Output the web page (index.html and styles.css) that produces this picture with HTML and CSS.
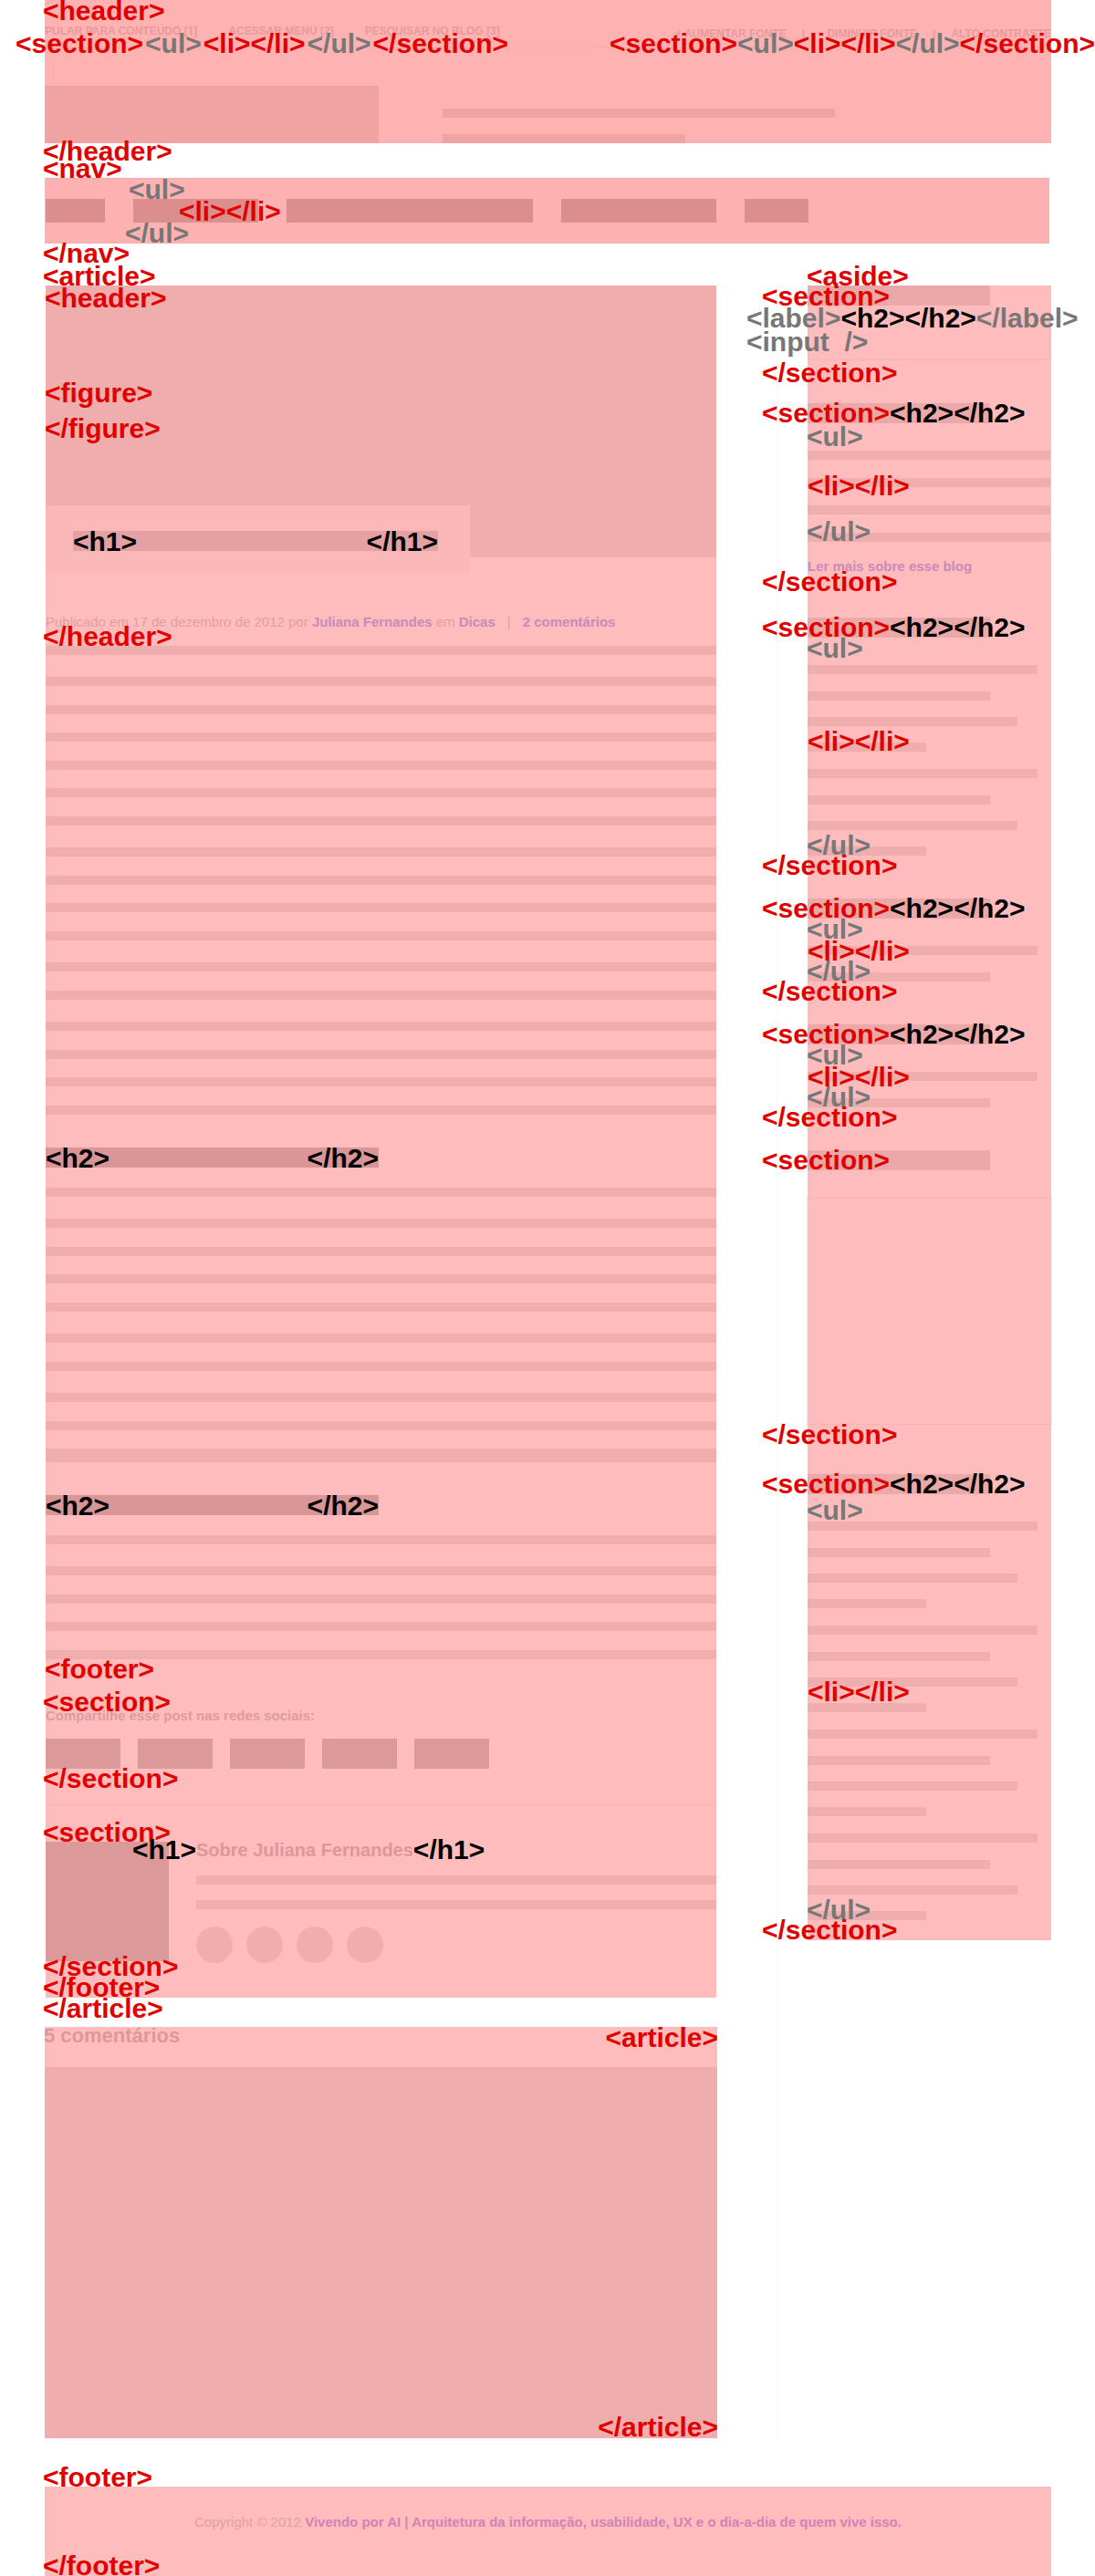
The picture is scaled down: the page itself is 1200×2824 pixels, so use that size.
FILE: index.html
```html
<!DOCTYPE html>
<html lang="pt-BR">
<head>
<meta charset="utf-8">
<title>Vivendo por AI</title>
<link rel="stylesheet" href="styles.css">
</head>
<body>
<div class="page">

  <header class="site-header">
    <span class="tag header-open">&lt;header&gt;</span>
    <div class="topbar">
      <ul class="skip-links">
        <li><a href="#conteudo">PULAR PARA CONTEÚDO [1]</a></li>
        <li><a href="#menu">ACESSAR MENU [2]</a></li>
        <li><a href="#busca">PESQUISAR NO BLOG [3]</a></li>
      </ul>
      <ul class="access-links">
        <li><a href="#mais">+ AUMENTAR FONTE</a></li>
        <li>|</li>
        <li><a href="#menos">- DIMINUIR FONTE</a></li>
        <li>|</li>
        <li><a href="#contraste">ALTO CONTRASTE</a></li>
      </ul>
      <div class="tag tag-row skip-tags"><span>&lt;section&gt;</span><span class="muted">&lt;ul&gt;</span><span>&lt;li&gt;&lt;/li&gt;</span><span class="muted">&lt;/ul&gt;</span><span>&lt;/section&gt;</span></div>
      <div class="tag tag-row access-tags"><span>&lt;section&gt;</span><span class="muted">&lt;ul&gt;</span><span>&lt;li&gt;&lt;/li&gt;</span><span class="muted">&lt;/ul&gt;</span><span>&lt;/section&gt;</span></div>
    </div>
    <div class="brand">
      <div class="logo"></div>
      <div class="tagline"><span class="tagline-long"></span><span class="tagline-short"></span></div>
    </div>
    <span class="tag header-close">&lt;/header&gt;</span>
  </header>

  <nav class="site-nav" id="menu">
    <span class="tag nav-open">&lt;nav&gt;</span>
    <ul class="menu">
      <li class="item-xs"></li>
      <li class="item-md"></li>
      <li class="item-xl"></li>
      <li class="item-lg"></li>
      <li class="item-sm"></li>
    </ul>
    <span class="tag muted nav-ul-open">&lt;ul&gt;</span>
    <span class="tag nav-li">&lt;li&gt;&lt;/li&gt;</span>
    <span class="tag muted nav-ul-close">&lt;/ul&gt;</span>
    <span class="tag nav-close">&lt;/nav&gt;</span>
  </nav>

  <div class="columns">
    <main class="content" id="conteudo">
      <article class="post">
        <span class="tag post-open">&lt;article&gt;</span>
        <header class="post-header">
          <span class="tag post-header-open">&lt;header&gt;</span>
          <figure class="post-figure">
            <span class="tag figure-open">&lt;figure&gt;</span>
            <span class="tag figure-close">&lt;/figure&gt;</span>
          </figure>
          <div class="title-box">
            <h1 class="title-bar"><span class="tag-text">&lt;h1&gt;</span><span class="tag-text">&lt;/h1&gt;</span></h1>
          </div>
          <p class="meta">Publicado em 17 de dezembro de 2012 por <a href="#autor">Juliana Fernandes</a> em <a href="#dicas">Dicas</a><span class="divider">|</span><a href="#comentarios">2 comentários</a></p>
          <span class="tag post-header-close">&lt;/header&gt;</span>
        </header>

        <div class="text">
          <div class="para"><span></span></div>
          <div class="para"><span></span><span></span><span></span><span></span><span></span><span></span></div>
          <div class="para"><span></span><span></span><span></span><span></span></div>
          <div class="para"><span></span><span></span></div>
          <div class="para"><span></span><span></span><span></span><span></span></div>
        </div>

        <h2 class="subtitle-bar"><span class="tag-text">&lt;h2&gt;</span><span class="tag-text">&lt;/h2&gt;</span></h2>
        <div class="text">
          <div class="para"><span></span></div>
          <div class="para"><span></span><span></span><span></span><span></span></div>
          <div class="para"><span></span><span></span></div>
          <div class="para"><span></span><span></span><span class="thick"></span></div>
        </div>

        <h2 class="subtitle-bar"><span class="tag-text">&lt;h2&gt;</span><span class="tag-text">&lt;/h2&gt;</span></h2>
        <div class="text">
          <div class="para"><span></span></div>
          <div class="para"><span></span><span></span><span></span><span></span></div>
        </div>

        <footer class="post-footer">
          <span class="tag post-footer-open">&lt;footer&gt;</span>
          <section class="share">
            <span class="tag share-open">&lt;section&gt;</span>
            <p class="share-label">Compartilhe esse post nas redes sociais:</p>
            <ul class="share-list"><li></li><li></li><li></li><li></li><li></li></ul>
            <span class="tag share-close">&lt;/section&gt;</span>
          </section>
          <section class="author" id="autor">
            <span class="tag author-open">&lt;section&gt;</span>
            <div class="photo"></div>
            <div class="bio">
              <h1 class="author-name">Sobre Juliana Fernandes<span class="tag dark name-open">&lt;h1&gt;</span><span class="tag dark name-close">&lt;/h1&gt;</span></h1>
              <div class="bio-lines"><span></span><span></span></div>
              <ul class="profiles"><li></li><li></li><li></li><li></li></ul>
            </div>
            <span class="tag author-close">&lt;/section&gt;</span>
          </section>
          <span class="tag post-footer-close">&lt;/footer&gt;</span>
        </footer>
        <span class="tag post-close">&lt;/article&gt;</span>
      </article>

      <article class="comments" id="comentarios">
        <span class="tag comments-open">&lt;article&gt;</span>
        <h2 class="comments-title">5 comentários</h2>
        <div class="comments-body"></div>
        <span class="tag comments-close">&lt;/article&gt;</span>
      </article>
    </main>

    <div class="side">
      <aside class="sidebar">
        <span class="tag aside-open">&lt;aside&gt;</span>

        <section class="widget search">
          <label class="widget-bar" for="busca"><span class="tag tag-row label-tags"><span class="muted">&lt;label&gt;</span><span class="dark">&lt;h2&gt;&lt;/h2&gt;</span><span class="muted">&lt;/label&gt;</span></span></label>
          <input class="search-box" id="busca" type="text">
          <span class="tag widget-open">&lt;section&gt;</span>
          <span class="tag muted input-tag">&lt;input  /&gt;</span>
          <span class="tag widget-close">&lt;/section&gt;</span>
        </section>

        <section class="widget about">
          <h2 class="widget-bar"></h2>
          <span class="tag widget-open">&lt;section&gt;<span class="dark">&lt;h2&gt;&lt;/h2&gt;</span></span>
          <div class="list">
            <ul class="bars bars-full"><li></li><li></li><li></li><li></li></ul>
            <span class="tag muted ul-open">&lt;ul&gt;</span>
            <span class="tag li-pair">&lt;li&gt;&lt;/li&gt;</span>
            <span class="tag muted ul-close">&lt;/ul&gt;</span>
          </div>
          <a class="more" href="#sobre">Ler mais sobre esse blog</a>
          <span class="tag widget-close">&lt;/section&gt;</span>
        </section>

        <section class="widget topics">
          <h2 class="widget-bar"></h2>
          <span class="tag widget-open">&lt;section&gt;<span class="dark">&lt;h2&gt;&lt;/h2&gt;</span></span>
          <div class="list">
            <ul class="bars"><li></li><li></li><li></li><li></li><li></li><li></li><li></li><li></li></ul>
            <span class="tag muted ul-open">&lt;ul&gt;</span>
            <span class="tag li-pair">&lt;li&gt;&lt;/li&gt;</span>
            <span class="tag muted ul-close">&lt;/ul&gt;</span>
          </div>
          <span class="tag widget-close">&lt;/section&gt;</span>
        </section>

        <section class="widget">
          <h2 class="widget-bar"></h2>
          <span class="tag widget-open">&lt;section&gt;<span class="dark">&lt;h2&gt;&lt;/h2&gt;</span></span>
          <div class="list">
            <ul class="bars"><li></li><li></li></ul>
            <span class="tag muted ul-open">&lt;ul&gt;</span>
            <span class="tag li-pair">&lt;li&gt;&lt;/li&gt;</span>
            <span class="tag muted ul-close">&lt;/ul&gt;</span>
          </div>
          <span class="tag widget-close">&lt;/section&gt;</span>
        </section>

        <section class="widget">
          <h2 class="widget-bar"></h2>
          <span class="tag widget-open">&lt;section&gt;<span class="dark">&lt;h2&gt;&lt;/h2&gt;</span></span>
          <div class="list">
            <ul class="bars"><li></li><li></li></ul>
            <span class="tag muted ul-open">&lt;ul&gt;</span>
            <span class="tag li-pair">&lt;li&gt;&lt;/li&gt;</span>
            <span class="tag muted ul-close">&lt;/ul&gt;</span>
          </div>
          <span class="tag widget-close">&lt;/section&gt;</span>
        </section>

        <section class="widget social">
          <h2 class="widget-bar"></h2>
          <span class="tag widget-open">&lt;section&gt;</span>
          <div class="social-box"></div>
          <span class="tag widget-close">&lt;/section&gt;</span>
        </section>

        <section class="widget archive">
          <h2 class="widget-bar"></h2>
          <span class="tag widget-open">&lt;section&gt;<span class="dark">&lt;h2&gt;&lt;/h2&gt;</span></span>
          <div class="list">
            <ul class="bars"><li></li><li></li><li></li><li></li><li></li><li></li><li></li><li></li><li></li><li></li><li></li><li></li><li></li><li></li><li></li><li></li></ul>
            <span class="tag muted ul-open">&lt;ul&gt;</span>
            <span class="tag li-pair">&lt;li&gt;&lt;/li&gt;</span>
            <span class="tag muted ul-close">&lt;/ul&gt;</span>
          </div>
          <span class="tag widget-close">&lt;/section&gt;</span>
        </section>
      </aside>
    </div>
  </div>

  <footer class="site-footer">
    <span class="tag footer-open">&lt;footer&gt;</span>
    <p class="copyright">Copyright © 2012 <a href="#inicio">Vivendo por AI | Arquitetura da informação, usabilidade, UX e o dia-a-dia de quem vive isso.</a></p>
    <span class="tag footer-close">&lt;/footer&gt;</span>
  </footer>
</div>
</body>
</html>
```

FILE: styles.css
```css
* { box-sizing: border-box; margin: 0; padding: 0; }

body {
  background: #fff;
  color: #dfa0a0;
  font: 15px/20px "Liberation Sans", Arial, sans-serif;
}

ul { list-style: none; }
a { color: inherit; text-decoration: none; }

.page { padding: 0 48px 0 49px; overflow: clip; }

/* Element names written over the wireframe */
.tag, .tag-text {
  color: #e10000;
  font-size: 30px;
  font-weight: bold;
  line-height: 30px;
  white-space: pre;
}
.tag { position: absolute; z-index: 2; left: -2px; }
.tag-text { color: #000; }
.tag-row { display: flex; }
.muted { color: #777; }
.dark { color: #000; }

/* Site header */
.site-header { position: relative; background: #feb2b2; }
.header-open { top: -3px; }
.header-close { bottom: -24px; }

.topbar {
  position: relative;
  display: flex;
  justify-content: space-between;
  height: 53px;
  border-bottom: 1px solid #f8abab;
  color: #e79b9b;
  font-size: 12px;
  font-weight: bold;
  line-height: 14px;
}
.skip-links { display: flex; gap: 34px; padding-top: 27px; }
.access-links { display: flex; gap: 17px; padding-top: 30px; }
.skip-tags { top: 33px; left: -32px; gap: 2px; }
.access-tags { top: 33px; left: auto; right: -48px; }

.brand { display: flex; gap: 70px; padding-top: 41px; }
.logo { width: 366px; height: 63px; background: #f1a3a3; }
.tagline { display: flex; flex-direction: column; justify-content: flex-end; gap: 18px; width: 430px; }
.tagline span { height: 10px; background: #f1a3a3; }
.tagline-short { width: 266px; }

/* Navigation */
.site-nav {
  position: relative;
  margin: 38px 2px 0 0;
  padding: 22px 1px 23px;
  border-top: 1px solid #f5aaaa;
  background: #feb1b1;
}
.menu { display: flex; gap: 31px; }
.menu li { height: 26px; background: #dc8e8d; }
.menu .item-xs { width: 65px; }
.menu .item-sm { width: 70px; }
.menu .item-md { width: 137px; }
.menu .item-lg { width: 170px; }
.menu .item-xl { width: 270px; }
.nav-open { top: -26px; }
.nav-close { bottom: -26px; }
.nav-ul-open { top: -3px; left: 92px; }
.nav-li { top: 21px; left: 147px; }
.nav-ul-close { bottom: -4px; left: 88px; }

/* Columns */
.columns { display: flex; gap: 65px; margin-top: 46px; }
.content { flex: 1; min-width: 0; }
.side { width: 301px; padding-left: 33px; border-left: 1px solid #f8f8f8; }

/* Post */
.post { position: relative; margin: 0 1px; padding-bottom: 38px; background: #ffbcbc; }
.post .tag { left: -3px; }
.post-open { top: -25px; }
.post-close { bottom: -27px; }

.post-header { position: relative; margin-bottom: 16px; }
.post-figure { position: relative; height: 298px; background: #f0adad; }
.post .post-header-open { top: -1px; left: -1px; }
.post .figure-open { top: 103px; left: -1px; }
.post .figure-close { top: 142px; left: -1px; }
.post-header-close { bottom: -21px; }
.title-box {
  position: relative;
  width: 465px;
  margin-top: -57px;
  padding: 28px 35px 24px 30px;
  background: #fbb8b8;
}
.title-bar, .subtitle-bar { display: flex; justify-content: space-between; height: 22px; }
.title-bar { background: #e5a1a1; }
.title-bar .tag-text, .subtitle-bar .tag-text { margin-top: -3px; }
.meta { margin-top: 44px; }
.meta a, .more { color: #c78bbb; font-weight: bold; }
.divider { margin: 0 13px; }

.subtitle-bar { width: 365px; margin: 36px 0 22px; background: #da9696; }

.text { display: flex; flex-direction: column; gap: 24px; }
.para span { display: block; height: 10px; margin-top: 21px; background: #f0adad; }
.para span:nth-child(odd) { margin-top: 20px; }
.para span:first-child { margin-top: 0; }
.para .thick { height: 15px; }

/* Post footer */
.post-footer { position: relative; padding-top: 52px; }
.post .post-footer-open { top: -4px; left: -1px; }
.post-footer-close { bottom: -42px; }
.share { position: relative; padding-bottom: 39px; border-bottom: 1px solid #f8b4b4; }
.share-open { top: -20px; }
.share-close { bottom: 13px; }
.share-label { margin-bottom: 15px; color: #dd9b9b; font-weight: bold; }
.share-list { display: flex; gap: 19px; }
.share-list li { width: 82px; height: 33px; background: #db9999; }

.author { position: relative; display: flex; gap: 30px; padding-top: 40px; }
.author-open { top: 15px; }
.author-close { bottom: -19px; }
.photo { width: 135px; height: 131px; background: #db9999; }
.bio { flex: 1; }
.author-name {
  position: relative;
  width: max-content;
  margin-bottom: 19px;
  color: #dd9797;
  font-size: 20px;
  line-height: 18px;
}
.post .name-open { top: -6px; left: auto; right: 100%; }
.post .name-close { top: -6px; left: 100%; }
.bio-lines { display: flex; flex-direction: column; gap: 17px; }
.bio-lines span { height: 10px; background: #f0adad; }
.profiles { display: flex; gap: 15px; margin-top: 19px; }
.profiles li { width: 40px; height: 40px; border-radius: 50%; background: #f0adad; }

/* Comments */
.comments { position: relative; margin-top: 32px; background: #ffbcbc; }
.comments .tag { left: auto; right: -1px; }
.comments-open { top: -3px; }
.comments-close { bottom: -3px; }
.comments-title { margin: 0 0 24px -1px; color: #dd9797; font-size: 22px; line-height: 20px; }
.comments-body { height: 407px; background: #f0adad; }

/* Sidebar */
.sidebar {
  position: relative;
  display: flex;
  flex-direction: column;
  gap: 47px;
  padding-bottom: 22px;
  background: #ffbcbc;
}
.aside-open { top: -25px; left: -1px; }
.widget { position: relative; }
.widget-bar { display: block; width: 200px; height: 22px; margin-bottom: 30px; background: #eaa8a8; }
.widget-open { top: -4px; left: -50px; }
.widget-close { bottom: -26px; left: -50px; }

.search .widget-bar { margin-bottom: 16px; }
.search .widget-open { top: -3px; }
.search .widget-close { bottom: -29px; }
.search-box {
  display: block;
  width: calc(100% - 1px);
  height: 44px;
  padding: 0 10px;
  border: 1px solid #f8b4b4;
  border-radius: 5px;
  outline: none;
  background: transparent;
  color: inherit;
  font: inherit;
}
.label-tags { top: 21px; left: -67px; }
.input-tag { top: 47px; left: -67px; }

.list { position: relative; }
.ul-open { top: -33px; left: -1px; }
.li-pair { top: -9px; left: 0; }
.ul-close { bottom: -4px; left: -1px; }

.bars li { height: 10px; background: #f0adad; }
.bars li + li { margin-top: 18px; }
.bars li:nth-child(4n+1) { width: 252px; }
.bars li:nth-child(4n+2) { width: 200px; margin-top: 19px; }
.bars li:nth-child(4n+3) { width: 230px; }
.bars li:nth-child(4n+4) { width: 130px; }
.bars li:nth-child(4n+5) { margin-top: 19px; }
.bars.bars-full li { width: auto; margin: 0 1px 20px 0; }
.bars.bars-full li:last-child { margin-bottom: 0; }

.about .ul-open { top: -30px; }
.about .li-pair { top: 24px; }
.about .more { display: block; margin-top: 18px; line-height: 18px; }
.about .widget-close { bottom: -23px; }
.topics .li-pair { top: 69px; }
.archive .ul-open { top: -27px; }
.archive .li-pair { top: 172px; }
.social { padding-bottom: 7px; }
.social .widget-close { bottom: -19px; }
.social-box { height: 249px; margin: 0 -1px; border: 1px solid #f5b3b3; border-right-color: #f0ecec; border-left-color: #f0ecec; }

/* Site footer */
.site-footer { position: relative; margin-top: 53px; padding: 29px 0 50px; background: #ffbcbc; }
.footer-open { top: -25px; }
.footer-close { bottom: -3px; }
.copyright { text-align: center; }
.copyright a { color: #d083b6; font-weight: bold; }
```
